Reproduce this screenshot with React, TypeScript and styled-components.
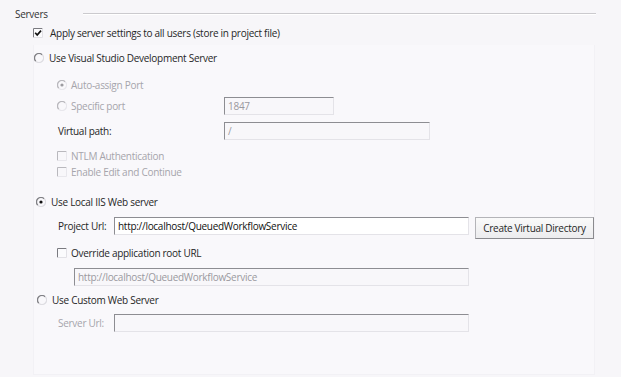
import styled, { createGlobalStyle } from "styled-components";

const GlobalStyle = createGlobalStyle`
  html, body {
    margin: 0;
    padding: 0;
    background: #f6f5f8;
  }
`;

const Page = styled.div`
  width: 621px;
  height: 377px;
  overflow: hidden;
  background: #f7f6f9;
  font-family: "Open Sans", "Lato", sans-serif;
  font-size: 10px;
  letter-spacing: -0.28px;
  color: #262626;
`;

const Header = styled.div`
  display: flex;
  align-items: center;
  height: 26px;
  padding-left: 15px;
  width: 581px;
`;

const Title = styled.span`
  color: #333;
  padding-top: 1px;
`;

const Rule = styled.div`
  flex: 1;
  margin-left: 35px;
  margin-top: 2px;
  height: 1px;
  background: #cbcace;
  border-bottom: 1px solid #ffffff;
`;

const Panel = styled.div`
  margin: 5px 0 0 33px;
  width: 562px;
  height: 330px;
  padding-top: 6px;
  box-sizing: border-box;
  background: #f9f8fb;
  border: 1px solid #f2f1f5;
  border-top: none;
`;

const Row = styled.div<{ $mt?: number; $h?: number; $pl?: number }>`
  display: flex;
  align-items: center;
  height: ${(p) => p.$h ?? 14}px;
  margin-top: ${(p) => p.$mt ?? 0}px;
  padding-left: ${(p) => p.$pl ?? 0}px;
`;

const Lead = styled.div<{ $w: number; $top?: boolean }>`
  display: flex;
  align-items: center;
  width: ${(p) => p.$w}px;
  height: 18px;
  align-self: ${(p) => (p.$top ? "flex-start" : "center")};
  flex-shrink: 0;
`;

const Label = styled.span<{ $ml?: number; $off?: boolean }>`
  margin-left: ${(p) => p.$ml ?? 0}px;
  color: ${(p) => (p.$off ? "#a6a5ab" : "#262626")};
  white-space: nowrap;
  line-height: 14px;
`;

const Field = styled.div<{ $w: number; $white?: boolean; $off?: boolean; $top?: boolean }>`
  width: ${(p) => p.$w}px;
  height: 18px;
  align-self: ${(p) => (p.$top ? "flex-start" : "center")};
  box-sizing: border-box;
  border-top: 1px solid #8d8d92;
  border-left: 1px solid #8d8d92;
  border-right: 1px solid #e4e3e8;
  border-bottom: 1px solid #e4e3e8;
  background: ${(p) => (p.$white ? "#ffffff" : "#f8f7fa")};
  color: ${(p) => (p.$off ? "#9a999f" : "#111")};
  padding-left: 3px;
  line-height: 16px;
  white-space: nowrap;
  overflow: hidden;
`;

const Button = styled.div`
  margin-left: 6px;
  align-self: flex-start;
  width: 119px;
  height: 22px;
  box-sizing: border-box;
  border: 1px solid #b4b4b8;
  border-right-color: #8a8a8e;
  border-bottom-color: #8a8a8e;
  background: linear-gradient(#fafafa, #ececee);
  display: flex;
  align-items: center;
  justify-content: center;
  color: #262626;
`;

function Radio({ on, off }: { on?: boolean; off?: boolean }) {
  const dark = off ? "#b9b8bd" : "#808085";
  const light = off ? "#e8e7ec" : "#dedde2";
  return (
    <svg width="10" height="10" viewBox="0 0 10 10">
      <path d="M1.8 8.2 A4.3 4.3 0 0 1 8.2 1.8" fill="none" stroke={dark} strokeWidth="1.3" />
      <path d="M8.2 1.8 A4.3 4.3 0 0 1 1.8 8.2" fill="none" stroke={light} strokeWidth="1.3" />
      {on && <circle cx="5" cy="5" r="1.6" fill={off ? "#9c9ba0" : "#111"} />}
    </svg>
  );
}

function Check({ on, off }: { on?: boolean; off?: boolean }) {
  const dark = off ? "#b9b8bd" : "#7a7a80";
  const light = off ? "#e8e7ec" : "#e2e1e6";
  return (
    <svg width="10" height="10" viewBox="0 0 10 10">
      <rect x="0" y="0" width="10" height="10" fill={off ? "#f8f7fa" : "#fbfbfd"} />
      <path d="M0.5 9.5 V0.5 H9.5" fill="none" stroke={dark} strokeWidth="1" />
      <path d="M9.5 0.5 V9.5 H0.5" fill="none" stroke={light} strokeWidth="1" />
      {on && <path d="M2.2 4.8 L4.2 7 L8 2.6" fill="none" stroke="#111" strokeWidth="1.7" />}
    </svg>
  );
}

export default function App() {
  const url = "http://localhost/QueuedWorkflowService";
  return (
    <Page>
      <GlobalStyle />
      <Header>
        <Title>Servers</Title>
        <Rule />
      </Header>

      <Row $pl={33}>
        <Check on />
        <Label $ml={7}>Apply server settings to all users (store in project file)</Label>
      </Row>

      <Panel>
        <Row>
          <Radio />
          <Label $ml={5}>Use Visual Studio Development Server</Label>
        </Row>

        <Row $mt={13} $pl={23}>
          <Radio on off />
          <Label $ml={4} $off>Auto-assign Port</Label>
        </Row>

        <Row $mt={5} $h={18} $pl={23}>
          <Lead $w={167}>
            <Radio off />
            <Label $ml={4} $off>Specific port</Label>
          </Lead>
          <Field $w={110} $off>1847</Field>
        </Row>

        <Row $mt={7} $h={18} $pl={24}>
          <Lead $w={166}>
            <Label>Virtual path:</Label>
          </Lead>
          <Field $w={206} $off>/</Field>
        </Row>

        <Row $mt={9} $pl={23}>
          <Check off />
          <Label $ml={4} $off>NTLM Authentication</Label>
        </Row>

        <Row $mt={2} $pl={23}>
          <Check off />
          <Label $ml={4} $off>Enable Edit and Continue</Label>
        </Row>

        <Row $mt={16} $pl={2}>
          <Radio on />
          <Label $ml={5}>Use Local IIS Web server</Label>
        </Row>

        <Row $mt={8} $h={22} $pl={24}>
          <Lead $w={56} $top>
            <Label>Project Url:</Label>
          </Lead>
          <Field $w={355} $white $top>{url}</Field>
          <Button>Create Virtual Directory</Button>
        </Row>

        <Row $mt={7} $pl={23}>
          <Check />
          <Label $ml={4}>Override application root URL</Label>
        </Row>

        <Row $mt={8} $h={18} $pl={40}>
          <Field $w={395} $off>{url}</Field>
        </Row>

        <Row $mt={7} $pl={3}>
          <Radio />
          <Label $ml={5}>Use Custom Web Server</Label>
        </Row>

        <Row $mt={7} $h={18} $pl={24}>
          <Lead $w={56}>
            <Label $off>Server Url:</Label>
          </Lead>
          <Field $w={355} $off />
        </Row>
      </Panel>
    </Page>
  );
}
